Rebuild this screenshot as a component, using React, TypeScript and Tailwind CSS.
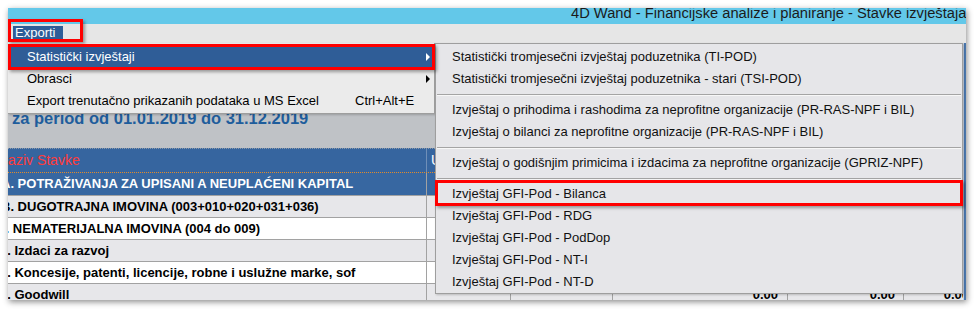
const subItems = [
  "Statistički tromjesečni izvještaj poduzetnika (TI-POD)",
  "Statistički tromjesečni izvještaj poduzetnika - stari (TSI-POD)",
  "-",
  "Izvještaj o prihodima i rashodima za neprofitne organizacije (PR-RAS-NPF i BIL)",
  "Izvještaj o bilanci za neprofitne organizacije (PR-RAS-NPF i BIL)",
  "-",
  "Izvještaj o godišnjim primicima i izdacima za neprofitne organizacije (GPRIZ-NPF)",
  "-",
  "Izvještaj GFI-Pod - Bilanca",
  "Izvještaj GFI-Pod - RDG",
  "Izvještaj GFI-Pod - PodDop",
  "Izvještaj GFI-Pod - NT-I",
  "Izvještaj GFI-Pod - NT-D",
];

const rows = [
  { text: "A. POTRAŽIVANJA ZA UPISANI A NEUPLAĆENI KAPITAL", shift: "ml-[-7px]", tone: "blue" },
  { text: "B. DUGOTRAJNA IMOVINA (003+010+020+031+036)", shift: "ml-[-7px]", tone: "gray" },
  { text: "I. NEMATERIJALNA IMOVINA (004 do 009)", shift: "ml-[-6px]", tone: "white" },
  { text: "1. Izdaci za razvoj", shift: "ml-[-8px]", tone: "gray" },
  { text: "2. Koncesije, patenti, licencije, robne i uslužne marke, sof", shift: "ml-[-8px]", tone: "white" },
  { text: "3. Goodwill", shift: "ml-[-8px]", tone: "gray" },
];

const toneClass: Record<string, string> = {
  blue: "bg-[#3767a1] text-white h-[23px]",
  gray: "bg-[#e7e7ea] text-black h-[22px]",
  white: "bg-white text-black h-[22px]",
};

const Arrow = ({ light }: { light?: boolean }) => (
  <span
    className={
      light
        ? "w-0 h-0 border-y-[4px] border-y-transparent border-l-[4px] border-l-white"
        : "w-0 h-0 border-y-[4px] border-y-transparent border-l-[4px] border-l-black"
    }
  />
);

const TableRow = ({ text, shift, tone }: { text: string; shift: string; tone: string }) => {
  const blue = tone === "blue";
  return (
    <div className={`flex shrink-0 border-b border-[#a2a2a2] text-[13px] font-bold leading-[21px] ${toneClass[tone]}`}>
      <div className="w-[418px] shrink-0 overflow-hidden whitespace-nowrap">
        <span className={`block ${shift}`}>{text}</span>
      </div>
      <div className="w-[84px] shrink-0 border-l border-[#a2a2a2]" />
      <div className="w-[102px] shrink-0 border-l border-[#a2a2a2]" />
      <div className="w-[175px] shrink-0 border-l border-[#a2a2a2] pr-[9px] text-right">{blue ? "" : "0.00"}</div>
      <div className="w-[116px] shrink-0 border-l border-[#a2a2a2] pr-[8px] text-right">{blue ? "" : "0.00"}</div>
      <div className="w-[74px] shrink-0 border-l border-[#a2a2a2] pr-[8px] text-right">{blue ? "" : "0.00"}</div>
    </div>
  );
};

const App = () => {
  return (
    <div className="w-[974px] h-[309px] bg-white pt-[8px] pl-[8px] overflow-hidden font-['Liberation_Sans',Arial,sans-serif]">
      <div className="relative flex flex-col w-[958px] h-[292px] overflow-hidden bg-[#e6e6e6] shadow-[1px_2px_6px_rgba(0,0,0,0.45)]">
        {/* title bar */}
        <div className="h-[16px] shrink-0 overflow-hidden bg-[#63c8e9] pl-[563px] text-[14.7px] leading-[10px] whitespace-nowrap text-[#1b1b1b]">
          4D Wand - Financijske analize i planiranje - Stavke izvještaja
        </div>

        {/* menu bar */}
        <div className="flex h-[19px] shrink-0 items-start bg-[#e6e6e6] pl-[5px] pt-[2px]">
          <span className="h-[14px] bg-[#2f5e98] pl-[2px] pr-[8px] text-[13px] leading-[14px] text-white">Exporti</span>
        </div>

        {/* body */}
        <div className="flex min-h-0 flex-1">
          <div className="flex min-w-0 flex-1 flex-col overflow-hidden">
            <div className="h-[105px] shrink-0 bg-[#bfc2c6] pl-[4px] pt-[65px] text-[16.5px] font-bold leading-[20px] whitespace-nowrap text-[#1e5d9c]">
              za period od 01.01.2019 do 31.12.2019
            </div>
            <div className="flex h-[25px] shrink-0 border-t border-t-[#8d99a8] border-b border-dotted border-b-[#e08b2c] bg-[#36659f] text-[14px] leading-[23px]">
              <div className="w-[418px] shrink-0 overflow-hidden whitespace-nowrap text-[#ff3b3b]">
                <span className="block ml-[-10px]">Naziv Stavke</span>
              </div>
              <div className="w-[84px] shrink-0 border-l border-[#6f8fb8] pl-[4px] text-white">Udio</div>
              <div className="w-[102px] shrink-0 border-l border-[#6f8fb8]" />
              <div className="w-[175px] shrink-0 border-l border-[#6f8fb8]" />
              <div className="w-[116px] shrink-0 border-l border-[#6f8fb8]" />
              <div className="w-[74px] shrink-0 border-l border-[#6f8fb8]" />
            </div>
            {rows.map((r) => (
              <TableRow key={r.text} text={r.text} shift={r.shift} tone={r.tone} />
            ))}
          </div>
          <div className="w-[3px] shrink-0 border-l border-[#c9d3e0] bg-[#4a77ae]" />
        </div>

        {/* Exporti dropdown */}
        <div className="absolute left-0 top-[35px] z-10 w-[427px] border-r border-b border-[#9e9e9e] bg-[#ebebeb] pt-[3px] pb-[1px] text-[13px] leading-[22px] text-black shadow-[1px_1px_2px_rgba(0,0,0,0.2)]">
          <div className="mx-[2px] flex h-[22px] items-center bg-[#2f5d97] pl-[17px] text-white">
            <span className="flex-1">Statistički izvještaji</span>
            <span className="flex w-[14px] justify-start pl-[8px]">
              <Arrow light />
            </span>
          </div>
          <div className="mx-[2px] flex h-[22px] items-center pl-[17px]">
            <span className="flex-1">Obrasci</span>
            <span className="flex w-[14px] justify-start pl-[8px]">
              <Arrow />
            </span>
          </div>
          <div className="mx-[2px] flex h-[22px] items-center pl-[17px]">
            <span className="flex-1">Export trenutačno prikazanih podataka u MS Excel</span>
            <span className="w-[77px]">Ctrl+Alt+E</span>
          </div>
        </div>

        {/* submenu */}
        <div className="absolute left-[427px] top-[35px] z-10 w-[528px] border border-[#9e9e9e] bg-[#e6e6e9] pt-[2px] text-[13px] leading-[22px] text-[#111] shadow-[1px_1px_2px_rgba(0,0,0,0.2)]">
          {subItems.map((s, i) =>
            s === "-" ? (
              <div key={i} className="flex h-[9px] flex-col justify-center px-[1px]">
                <div className="h-px bg-[#a4a4a4]" />
                <div className="h-px bg-[#f7f7f7]" />
              </div>
            ) : (
              <div key={i} className="h-[22px] whitespace-nowrap pl-[16px]">
                {s}
              </div>
            )
          )}
        </div>

        {/* annotations */}
        <div className="absolute left-0 top-[11px] z-20 h-[23px] w-[75px] border-[3px] border-[#ff0000] shadow-[2px_2px_3px_rgba(0,0,0,0.35)]" />
        <div className="absolute left-0 top-[36px] z-20 h-[26px] w-[427px] border-[3px] border-[#ff0000] shadow-[2px_2px_3px_rgba(0,0,0,0.35)]" />
        <div className="absolute left-[427px] top-[172px] z-20 h-[26px] w-[528px] border-[3px] border-[#ff0000] shadow-[2px_2px_3px_rgba(0,0,0,0.35)]" />
      </div>
    </div>
  );
};

export default App;
